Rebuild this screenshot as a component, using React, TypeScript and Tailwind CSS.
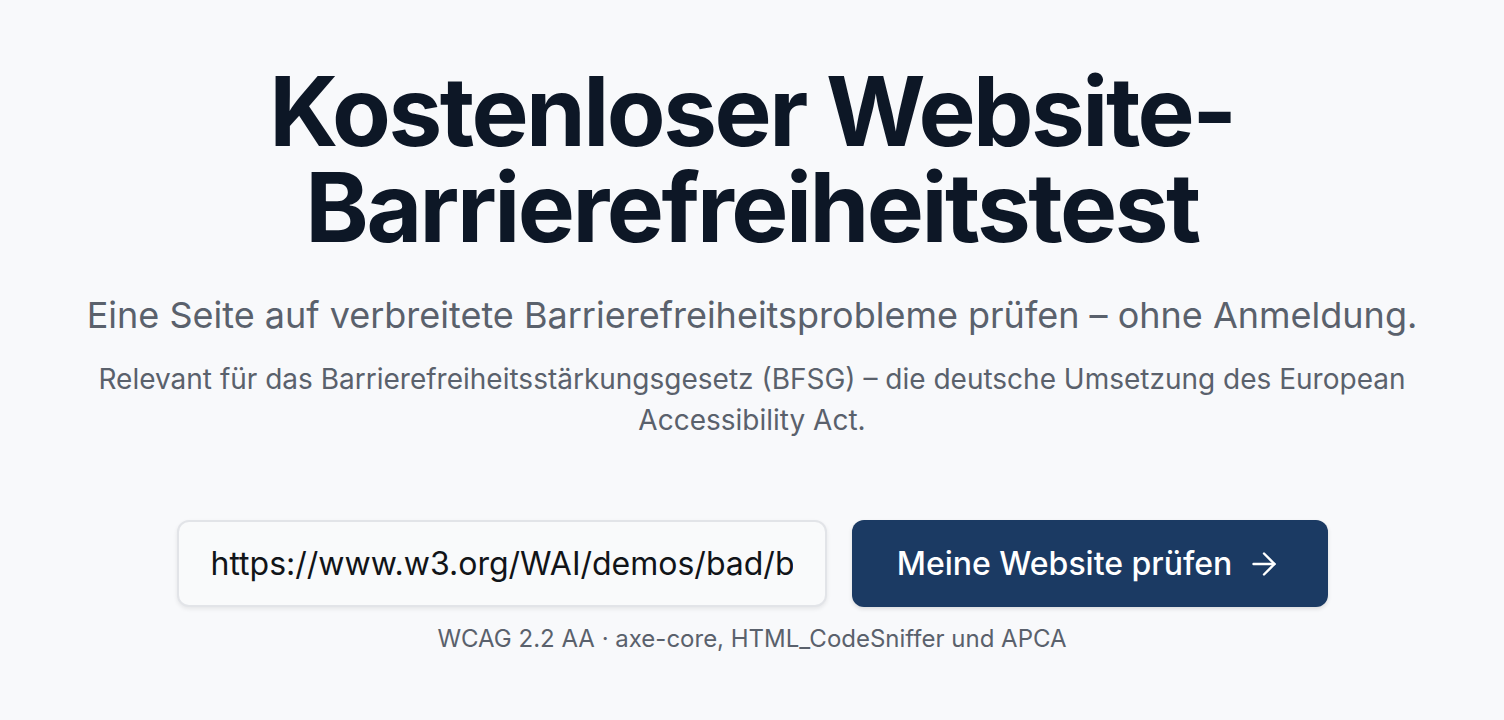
import React from "react";
import { ArrowRight } from "lucide-react";

export default function App() {
  return (
    <div
      className="min-h-[720px] w-full bg-[#f8f9fb] flex flex-col items-center pt-[63px]"
      style={{ fontFamily: "Inter, 'Noto Sans', sans-serif" }}
    >
      <h1 className="text-center text-[96px] leading-[96px] font-bold tracking-[-0.026em] text-[#0d1726]">
        Kostenloser Website-
        <br />
        Barrierefreiheitstest
      </h1>
      <p className="mt-[40px] text-center text-[36px] leading-[40px] text-[#5a616c]">
        Eine Seite auf verbreitete Barrierefreiheitsprobleme prüfen – ohne Anmeldung.
      </p>
      <p className="mt-[24px] max-w-[1330px] text-center text-[28px] leading-[41px] text-[#5a616c]">
        Relevant für das Barrierefreiheitsstärkungsgesetz (BFSG) – die deutsche Umsetzung des European Accessibility Act.
      </p>
      <form className="mt-[79px] flex gap-[25px]" onSubmit={(e) => e.preventDefault()}>
        <input
          type="url"
          aria-label="Website-URL"
          defaultValue="https://www.w3.org/WAI/demos/bad/before/home.html"
          className="w-[650px] h-[87px] rounded-[12px] border-2 border-[#e2e4e8] bg-[#f9fafb] px-[32px] text-[32px] text-[#111418] shadow-[0_2px_4px_rgba(0,0,0,0.08)] outline-none"
        />
        <button
          type="submit"
          className="w-[476px] h-[87px] rounded-[12px] bg-[#1b3a63] text-white text-[32px] font-medium flex items-center justify-center gap-[14px] shadow-[0_2px_4px_rgba(0,0,0,0.12)]"
        >
          <span>Meine Website prüfen</span>
          <ArrowRight size={36} strokeWidth={1.6} />
        </button>
      </form>
      <p className="mt-[16px] text-center text-[24px] leading-[32px] text-[#5a616c]">
        WCAG 2.2 AA · axe-core, HTML_CodeSniffer und APCA
      </p>
    </div>
  );
}
